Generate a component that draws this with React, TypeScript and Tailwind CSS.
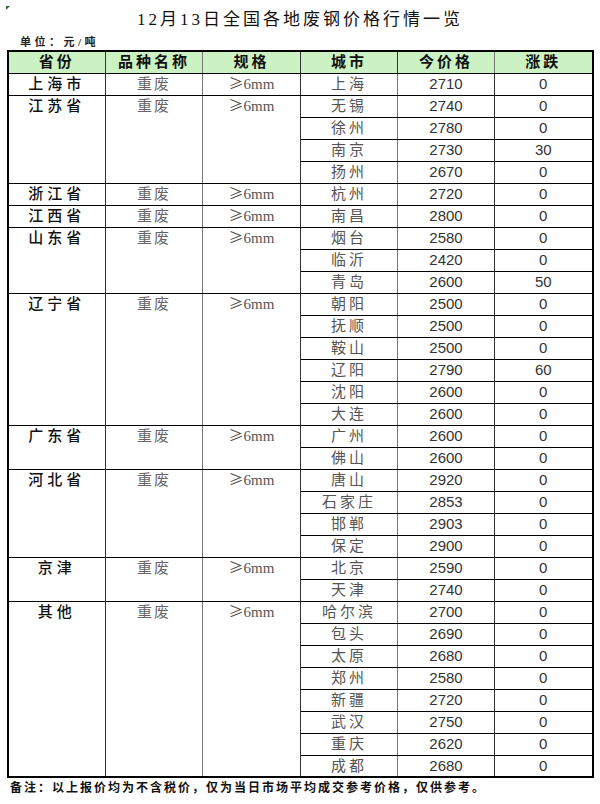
import React from 'react'

type Group = {
	province: string
	cities: [string, number, number][]
}

const groups: Group[] = [
	{ province: '上海市', cities: [['上海', 2710, 0]] },
	{
		province: '江苏省',
		cities: [
			['无锡', 2740, 0],
			['徐州', 2780, 0],
			['南京', 2730, 30],
			['扬州', 2670, 0],
		],
	},
	{ province: '浙江省', cities: [['杭州', 2720, 0]] },
	{ province: '江西省', cities: [['南昌', 2800, 0]] },
	{
		province: '山东省',
		cities: [
			['烟台', 2580, 0],
			['临沂', 2420, 0],
			['青岛', 2600, 50],
		],
	},
	{
		province: '辽宁省',
		cities: [
			['朝阳', 2500, 0],
			['抚顺', 2500, 0],
			['鞍山', 2500, 0],
			['辽阳', 2790, 60],
			['沈阳', 2600, 0],
			['大连', 2600, 0],
		],
	},
	{
		province: '广东省',
		cities: [
			['广州', 2600, 0],
			['佛山', 2600, 0],
		],
	},
	{
		province: '河北省',
		cities: [
			['唐山', 2920, 0],
			['石家庄', 2853, 0],
			['邯郸', 2903, 0],
			['保定', 2900, 0],
		],
	},
	{
		province: '京津',
		cities: [
			['北京', 2590, 0],
			['天津', 2740, 0],
		],
	},
	{
		province: '其他',
		cities: [
			['哈尔滨', 2700, 0],
			['包头', 2690, 0],
			['太原', 2680, 0],
			['郑州', 2580, 0],
			['新疆', 2720, 0],
			['武汉', 2750, 0],
			['重庆', 2620, 0],
			['成都', 2680, 0],
		],
	},
]

const serif = { fontFamily: '"Liberation Serif", "Noto Sans CJK SC", serif' }
const sans = { fontFamily: '"Liberation Sans", "Noto Sans CJK SC", sans-serif' }
const cjk = { fontFamily: '"Noto Sans CJK SC", sans-serif' }

const headers = ['省份', '品种名称', '规格', '城市', '今价格', '涨跌']

export default function App() {
	return (
		<div className="relative w-[600px] h-[804px] bg-white text-black" style={serif}>
			{/* 批注标记 */}
			<svg className="absolute left-[6px] top-[6px]" width="4" height="4" viewBox="0 0 4 4">
				<polygon points="0,0 4,0 0,4" fill="#2f6b2f" />
			</svg>

			<div className="pt-[8px] h-[34px] text-center text-[17px] leading-[24px] tracking-[3px] text-[#111]">
				12月13日全国各地废钢价格行情一览
			</div>
			<div className="pl-[20px] h-[16px] text-[11px] leading-[16px] font-bold tracking-[3.5px] text-[#222]">
				单位：元/吨
			</div>

			<table className="mx-auto w-[585px] table-fixed border-collapse border-2 border-black">
				<colgroup>
					<col className="w-[98px]" />
					<col className="w-[97px]" />
					<col className="w-[98px]" />
					<col className="w-[97px]" />
					<col className="w-[97px]" />
					<col className="w-[98px]" />
				</colgroup>
				<thead>
					<tr className="h-[22px] bg-[#ccf2c4]">
						{headers.map((h, i) => (
							<th
								key={h}
								className={`p-0 text-[15px] leading-[20px] font-bold tracking-[3px] text-[#111] border-b border-black ${
									i < 5 ? (i === 1 || i === 4 ? 'border-r border-r-[#777]' : 'border-r border-r-[#333]') : ''
								}`}
							>
								{h}
							</th>
						))}
					</tr>
				</thead>
				<tbody>
					{groups.map((g) =>
						g.cities.map(([city, price, change], idx) => (
							<tr key={city} className="h-[22px]">
								{idx === 0 && (
									<>
										<td
											rowSpan={g.cities.length}
											className="p-0 align-top text-center text-[15px] leading-[20px] font-medium tracking-[4px] text-[#111] border-b border-black border-r border-r-[#333]"
										>
											{g.province}
										</td>
										<td
											rowSpan={g.cities.length}
											className="p-0 align-top text-center text-[15px] leading-[20px] tracking-[2px] text-[#666] border-b border-black border-r border-r-[#777]"
										>
											重废
										</td>
										<td
											rowSpan={g.cities.length}
											className="p-0 align-top text-center text-[15px] leading-[20px] text-[#555] border-b border-black border-r border-r-[#333]"
										>
											<span style={cjk} className="text-[15px] leading-none">≥</span>6mm
										</td>
									</>
								)}
								<td className="p-0 text-center text-[15px] leading-[20px] tracking-[3px] text-[#555] border-b border-black border-r border-r-[#777]">
									{city}
								</td>
								<td
									className="p-0 text-center text-[15px] leading-[20px] text-[#333] border-b border-black border-r border-r-[#333]"
									style={sans}
								>
									{price}
								</td>
								<td
									className="p-0 text-center text-[15px] leading-[20px] text-[#333] border-b border-black"
									style={sans}
								>
									{change}
								</td>
							</tr>
						)),
					)}
				</tbody>
			</table>

			<div className="pl-[10px] pt-[1px] text-[12px] leading-[18px] font-bold tracking-[2px] text-[#111]">
				备注：以上报价均为不含税价，仅为当日市场平均成交参考价格，仅供参考。
			</div>
		</div>
	)
}
